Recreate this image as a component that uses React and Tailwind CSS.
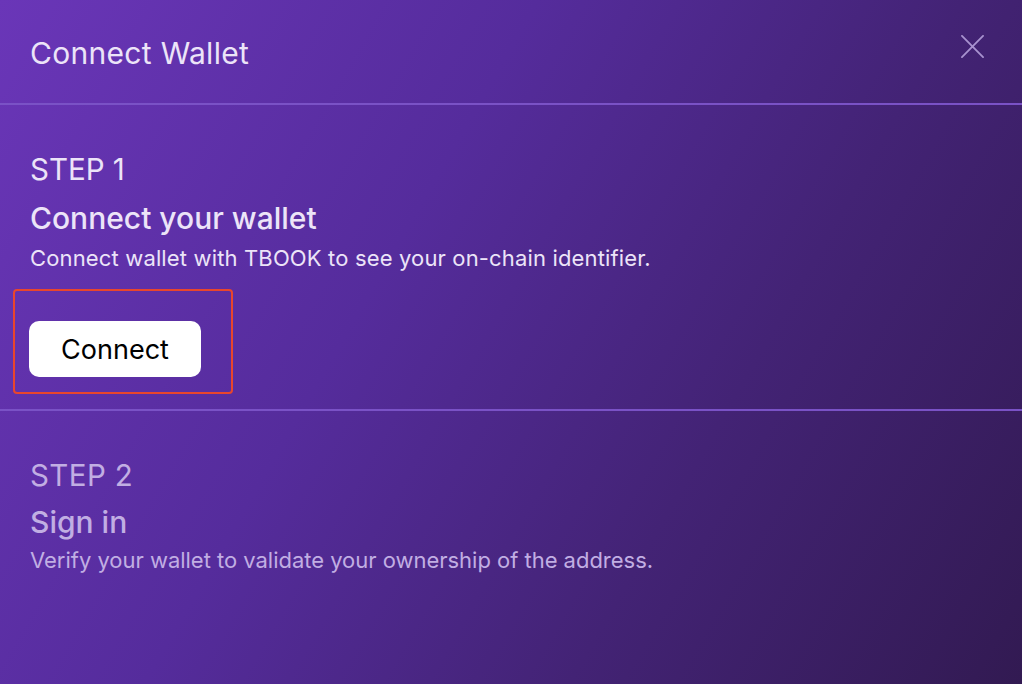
export default function App() {
  return (
    <div
      className="w-[1022px] h-[684px] overflow-hidden bg-[linear-gradient(120deg,#6a36b8_0%,#552c9c_38%,#432375_68%,#321a52_100%)] text-[#ece4f8]"
      style={{ fontFamily: "Inter, 'Noto Sans', sans-serif" }}
    >
      <div className="h-[103px] pl-[30px] pr-[38px] flex items-center justify-between">
        <div className="text-[30px] leading-[36px] font-normal tracking-[0.3px] mt-[2px]">Connect Wallet</div>
        <svg width="23" height="23" viewBox="0 0 24 24" className="mb-[10px]">
          <path d="M1 1L23 23M23 1L1 23" stroke="#a892cf" strokeWidth="1.9" strokeLinecap="round" />
        </svg>
      </div>
      <div className="h-[2px] bg-[#7a52c6]" />
      <div className="pl-[30px] pt-[46px] h-[304px]">
        <div className="text-[29.5px] leading-[36px]">STEP 1</div>
        <div className="mt-[14px] text-[30px] leading-[34px] font-medium">Connect your wallet</div>
        <div className="mt-[9px] text-[22px] leading-[28px] tracking-[0.15px]">
          Connect wallet with TBOOK to see your on-chain identifier.
        </div>
        <div className="mt-[17px] -ml-[17px] w-[220px] h-[105px] border-2 border-[#e9462c] rounded-[4px] pl-[14px] pt-[30px]">
          <button className="w-[172px] h-[56px] bg-white rounded-[10px] text-black text-[27px] leading-none">
            Connect
          </button>
        </div>
      </div>
      <div className="h-[2px] bg-[#7a52c6]" />
      <div className="pl-[30px] pt-[46px] text-[#c1aee3]">
        <div className="text-[29.5px] leading-[36px] tracking-[0.4px]">STEP 2</div>
        <div className="mt-[12px] text-[30px] leading-[34px] font-medium">Sign in</div>
        <div className="mt-[7px] text-[22px] leading-[28px] tracking-[-0.02px]">
          Verify your wallet to validate your ownership of the address.
        </div>
      </div>
    </div>
  );
}
